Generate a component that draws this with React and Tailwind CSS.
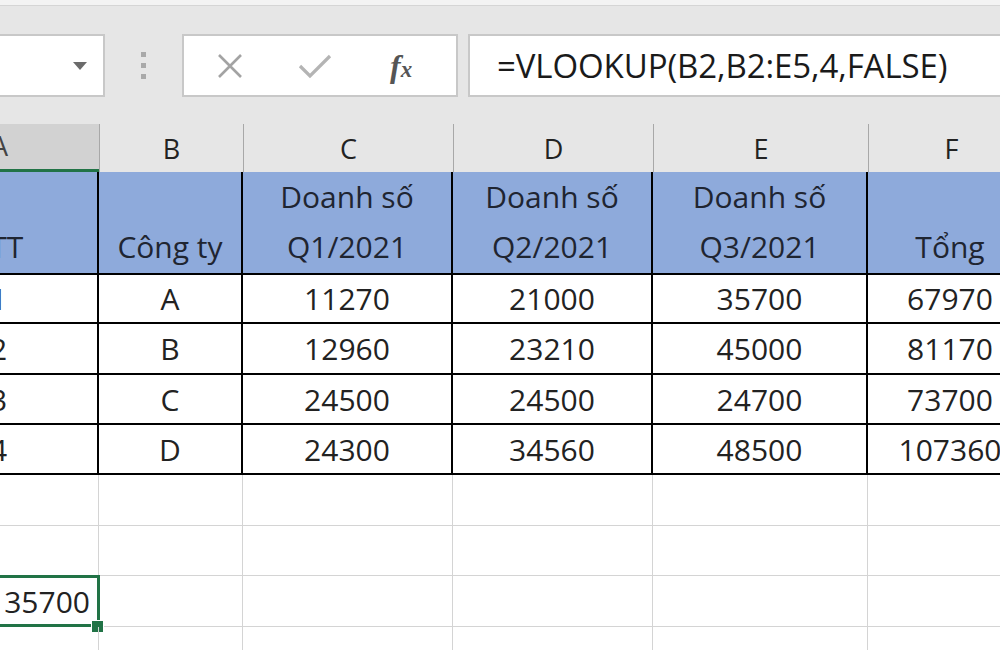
import React from "react";

const font = { fontFamily: '"Open Sans", "Noto Sans", sans-serif' };

const headers = [
  { lines: ["STT"] },
  { lines: ["Công ty"] },
  { lines: ["Doanh số", "Q1/2021"] },
  { lines: ["Doanh số", "Q2/2021"] },
  { lines: ["Doanh số", "Q3/2021"] },
  { lines: ["Tổng"] },
];

const rows = [
  { h: "h-[50px]", cells: ["1", "A", "11270", "21000", "35700", "67970"] },
  { h: "h-[51px]", cells: ["2", "B", "12960", "23210", "45000", "81170"] },
  { h: "h-[50px]", cells: ["3", "C", "24500", "24500", "24700", "73700"] },
  { h: "h-[50px]", cells: ["4", "D", "24300", "34560", "48500", "107360"] },
];

const emptyRows = ["h-[51px]", "h-[50px]", "h-[51px]", "h-[50px]"];

const letters = ["A", "B", "C", "D", "E", "F"];

const gridCols = "grid grid-cols-[199px_144px_210px_200px_215px_166px]";

function FormulaBar() {
  return (
    <div className="bg-[#e6e6e6] border-t border-[#d5d5d5] flex items-center h-[119px] pt-[1px]">
      {/* name box */}
      <div className="shrink-0 w-[105px] h-[63px] bg-white border-2 border-l-0 border-[#c8c8c8] flex items-center justify-end pr-[16px]">
        <svg width="14" height="8" viewBox="0 0 14 8">
          <path d="M0 0 L14 0 L7 8 Z" fill="#6b6b6b" />
        </svg>
      </div>
      <div className="shrink-0 w-[77px] flex flex-col items-center gap-[6px]">
        <span className="w-[5px] h-[5px] bg-[#a9a9a9]" />
        <span className="w-[5px] h-[5px] bg-[#a9a9a9]" />
        <span className="w-[5px] h-[5px] bg-[#a9a9a9]" />
      </div>
      {/* cancel / enter / fx */}
      <div className="shrink-0 w-[276px] h-[63px] bg-white border-2 border-[#c8c8c8] flex items-center">
        <svg className="ml-[33px]" width="26" height="26" viewBox="0 0 26 26">
          <path d="M2 2 L24 24 M24 2 L2 24" stroke="#a3a3a3" strokeWidth="2.6" />
        </svg>
        <svg className="ml-[55px]" width="34" height="26" viewBox="0 0 34 26">
          <path d="M2 13 L12 23 L32 3" stroke="#b4b4b4" strokeWidth="3.2" fill="none" />
        </svg>
        <span
          className="ml-[58px] text-[#555] italic font-bold text-[32px] leading-none"
          style={{ fontFamily: '"Liberation Serif", "DejaVu Serif", serif' }}
        >
          f<span className="text-[23px]">x</span>
        </span>
      </div>
      {/* formula */}
      <div className="shrink-0 ml-[10px] w-[560px] h-[63px] bg-white border-2 border-r-0 border-[#c8c8c8] flex items-center pl-[27px]">
        <span className="text-[33px] text-[#1a1a1a] leading-none tracking-[-0.1px]" style={font}>
          =VLOOKUP(B2,B2:E5,4,FALSE)
        </span>
      </div>
    </div>
  );
}

export default function App() {
  return (
    <div className="w-[1000px] h-[650px] overflow-hidden bg-white" style={font}>
      <div className="h-[5px] bg-[#f3f3f3]" />
      <FormulaBar />

      <div className="-ml-[100px] w-[1134px]">
        {/* column letters */}
        <div className={`${gridCols} h-[48px] bg-[#e6e6e6]`}>
          {letters.map((l, i) => (
            <div
              key={l}
              className={
                i === 0
                  ? "bg-[#d2d2d2] border-b-[3px] border-[#217346] flex items-center justify-center text-[27px] text-[#444]"
                  : "border-l border-[#a8a8a8] flex items-center justify-center text-[27px] text-[#222] pt-[3px]"
              }
            >
              {l}
            </div>
          ))}
        </div>

        {/* table header row */}
        <div className={`${gridCols} h-[102px] bg-[#8eaadb]`}>
          {headers.map((h, i) => (
            <div
              key={i}
              className="border-r-2 border-b-2 border-black flex flex-col justify-end items-center text-[30px] leading-[50px] text-[#1f2531] pb-[1px]"
            >
              {h.lines.map((t) => (
                <span key={t}>{t}</span>
              ))}
            </div>
          ))}
        </div>

        {rows.map((r, ri) => (
          <div key={ri} className={`${gridCols} ${r.h}`}>
            {r.cells.map((c, ci) => (
              <div
                key={ci}
                className="border-r-2 border-b-2 border-black flex items-center justify-center text-[30px] text-[#222]"
              >
                {c}
              </div>
            ))}
          </div>
        ))}

        {emptyRows.map((h, ri) => (
          <div key={ri} className={`${gridCols} ${h}`}>
            {letters.map((l, ci) => (
              <div
                key={l}
                className={
                  ci === 0
                    ? "relative border-r border-b border-[#d4d4d4] flex items-center justify-end pr-[8px] text-[30px] text-[#222]"
                    : "border-r border-b border-[#d4d4d4]"
                }
              >
                {ci === 0 && ri === 2 && (
                  <>
                    <span>35700</span>
                    <div className="absolute -left-[2px] -top-[1px] -right-[2px] -bottom-[1px] border-[3px] border-[#217346]" />
                    <div className="absolute -right-[6px] -bottom-[7px] w-[13px] h-[13px] bg-[#217346] border border-white" />
                  </>
                )}
              </div>
            ))}
          </div>
        ))}
      </div>
    </div>
  );
}
